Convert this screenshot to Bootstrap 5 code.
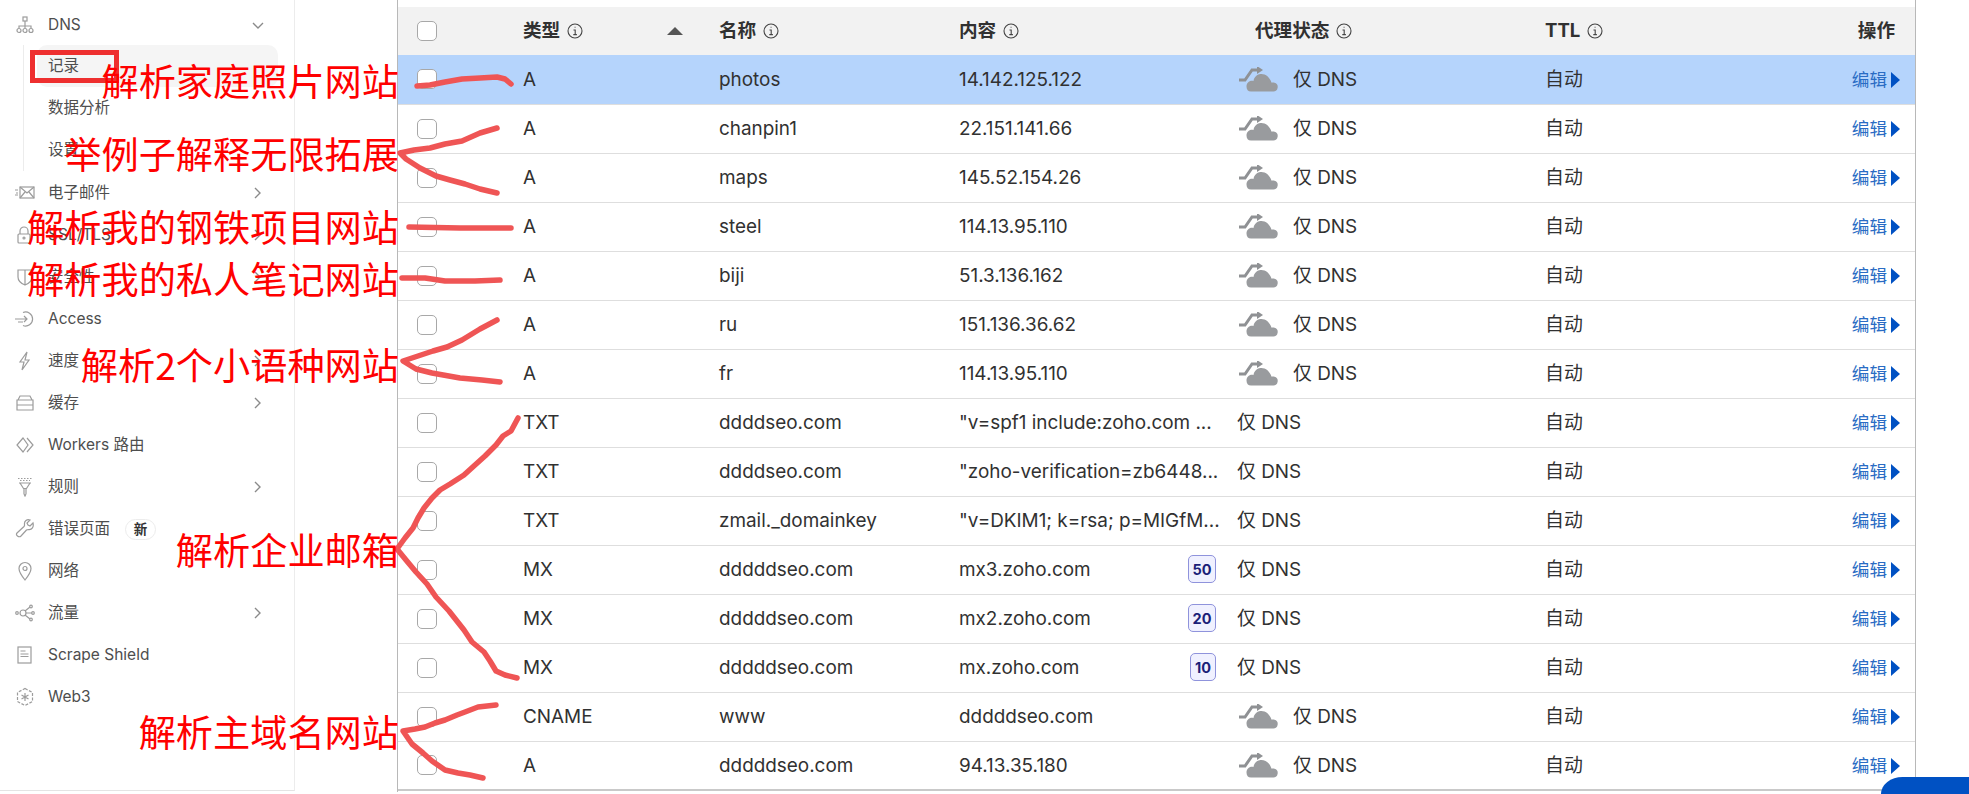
<!DOCTYPE html>
<html lang="zh-CN">
<head>
<meta charset="utf-8">
<title>DNS 记录</title>
<link href="https://cdn.jsdelivr.net/npm/bootstrap@5.3.0/dist/css/bootstrap.min.css" rel="stylesheet">
<style>
html,body{height:794px;overflow:hidden;background:#fff;}
body{font-family:Inter,"Noto Sans CJK SC",sans-serif;color:#313131;position:relative;}
.side-col{width:295px;height:791px;border-right:1px solid #ececec;border-bottom:1px solid #e4e4e4;padding:4px 30px 0 15px;flex:none;font-size:15.5px;color:#4e4e4e;}
.side-row{height:42px;}
.side-ico{width:20px;height:20px;margin-right:13px;flex:none;fill:none;stroke:#9c9c9c;stroke-width:1.2;}
.side-chev{width:12px;height:12px;margin-left:auto;margin-right:0;fill:none;stroke:#8a8a8a;stroke-width:1.4;}
.side-sub{margin-left:8px;margin-top:-1px;margin-bottom:1px;border-left:1px solid #ececec;position:relative;}
.side-sub .side-row{margin-left:13px;margin-right:-14px;padding-left:11px;}
.side-on{background:#f5f5f5;border-radius:10px;}
.new-tag{margin-left:15px;width:31px;height:21px;border:1px solid #ececec;border-radius:11px;font-size:13.5px;font-weight:700;color:#333;}
.rec-wrap{margin-left:102px;width:1519px;height:792px;padding-top:7px;border-left:1px solid #b8b8b8;border-right:1px solid #b8b8b8;flex:none;}
.rec-table{table-layout:fixed;width:1517px;margin:0;font-size:18.9px;border-bottom:2px solid #c9c9c9;}
.rec-table>*>tr>*{padding:0 0 0 12px;vertical-align:middle;height:49px;border-color:#dedede;color:#313131;white-space:nowrap;overflow:hidden;font-weight:400;}
.rec-table>tbody>tr>td{padding-top:2px;}
.rec-table>tbody>tr>td.cb{padding-top:0;}
.rec-table>thead>tr>*{height:48px;background:#f2f2f2;font-weight:700;font-size:18.6px;border-bottom:0;}
.rec-table>tbody>tr.rec-sel>td{background:#b5d4fc;}
.c1{width:113px;}.c2{width:196px;}.c3{width:240px;}.c4{width:278px;}.c5{width:308px;}.c6{width:247px;}.c7{width:135px;}
.rec-table>*>tr>.cb{padding-left:19px;}
.rec-table .form-check-input{width:20px;height:20px;margin:0;border:1px solid #a8a8a8;border-radius:5px;display:block;}
.info-ico{width:16px;height:16px;margin-left:7px;fill:none;stroke:#444;stroke-width:1.1;}
.sort-up{width:0;height:0;border-left:8px solid transparent;border-right:8px solid transparent;border-bottom:8px solid #555;margin-left:auto;margin-right:24px;}
.rec-table>*>tr>.prox-h{padding-left:30px;}
.cloud-ico{width:40px;height:25px;margin-left:1px;margin-right:15px;margin-top:-2px;flex:none;}
.prio{height:28px;width:28px;margin-right:9px;margin-top:-2px;border:1px solid #8f93dc;border-radius:5px;background:#f0f1ff;color:#1c1f78;font-size:14.5px;font-weight:700;flex:none;}
.prio-s{width:26px;}
.rec-table>*>tr>.act{padding:0 15px 0 0;text-align:right;}
.rec-table>tbody>tr>td.act{padding-top:2px;}
.rec-table>thead>tr>.act{padding-right:20px;}
.edit-lnk{color:#2a6cc4;text-decoration:none;font-size:17.6px;}
.edit-tri{display:inline-block;width:0;height:0;border-top:8px solid transparent;border-bottom:8px solid transparent;border-left:9px solid #0051c3;margin-left:4px;vertical-align:-2px;}
.ink{position:absolute;left:0;top:0;width:1969px;height:794px;pointer-events:none;fill:none;stroke:#ef5555;stroke-width:5.5;stroke-linecap:round;stroke-linejoin:round;}
.red-box{position:absolute;left:30px;top:50px;width:89px;height:33px;border:5px solid #ee2f2f;}
.note{position:absolute;left:0;width:399px;text-align:right;font-family:"Noto Sans CJK SC",sans-serif;font-size:37.2px;line-height:44px;color:#f00;white-space:nowrap;}
.n1{top:58px}.n2{top:131px}.n3{top:204px}.n4{top:256px}.n5{top:342px}.n6{top:527px}.n7{top:709px}
.chat-tab{position:absolute;right:0;bottom:0;width:88px;height:17px;background:#0051c3;border-top-left-radius:38px 30px;}
</style>
</head>
<body>
<svg width="0" height="0" class="position-absolute">
<defs>
<symbol id="i-info" viewBox="0 0 16 16"><circle cx="8" cy="8" r="7"/><path d="M6.500 7h1.700v4.600M6.300 11.600h3.600M7.600 4.300h.9"/></symbol>
<symbol id="i-cloud" viewBox="0 0 40 25"><path d="M1 13h6L14 3h7" fill="none" stroke="#8f9194" stroke-width="3"/><path d="M19 -1l6 4-6 4z" fill="#8f9194"/><path d="M13 24.500H35a4.500 4.500 0 0 0 1.500-8.800c-1-.3-3 0-3 0C32 10 27 6.500 22.500 7c-4 .5-6.500 3.500-7 7-4-1-7 2-7 5.500 0 3 1.500 5 4.500 5z" fill="#999b9e"/></symbol>
</defs>
</svg>
<div class="d-flex">
<nav class="side-col">
<div class="side-row d-flex align-items-center"><svg class="side-ico" viewBox="0 0 20 20"><rect x="8" y="2" width="4" height="4"/><path d="M10 6v5M4 13v-2h12v2M10 11v2"/><circle cx="4" cy="15.500" r="2"/><circle cx="10" cy="15.500" r="2"/><circle cx="16" cy="15.500" r="2"/></svg>DNS<svg class="side-chev" viewBox="0 0 12 12"><path d="M1 4l5 5 5-5"/></svg></div>
<div class="side-sub">
<div class="side-row side-on d-flex align-items-center">记录</div>
<div class="side-row d-flex align-items-center">数据分析</div>
<div class="side-row d-flex align-items-center">设置</div>
</div>
<div class="side-row d-flex align-items-center"><svg class="side-ico" viewBox="0 0 20 20"><rect x="5" y="4" width="14" height="11"/><path d="M5 4l7 6 7-6M5 15l5-6M19 15l-5-6M0 7h3M1 10h2M0 12h3"/></svg>电子邮件<svg class="side-chev" viewBox="0 0 12 12"><path d="M3 1l5 5-5 5"/></svg></div>
<div class="side-row d-flex align-items-center"><svg class="side-ico" viewBox="0 0 20 20"><rect x="3" y="9" width="12" height="9" rx="1"/><path d="M5 9V6a4 4 0 0 1 8 0v3"/><circle cx="9" cy="13" r="1"/></svg>SSL/TLS<svg class="side-chev" viewBox="0 0 12 12"><path d="M3 1l5 5-5 5"/></svg></div>
<div class="side-row d-flex align-items-center"><svg class="side-ico" viewBox="0 0 20 20"><path d="M3 3h14v7c0 4-3 6.500-7 8-4-1.500-7-4-7-8zM10 3v15"/></svg>安全性<svg class="side-chev" viewBox="0 0 12 12"><path d="M3 1l5 5-5 5"/></svg></div>
<div class="side-row d-flex align-items-center"><svg class="side-ico" viewBox="0 0 20 20"><path d="M8 3.500a7 7 0 1 1 0 13M0 10h12M9 7l3 3-3 3M3 13h5"/></svg>Access</div>
<div class="side-row d-flex align-items-center"><svg class="side-ico" viewBox="0 0 20 20"><path d="M12 1L5 11h4l-2 8 7-10h-4z"/></svg>速度<svg class="side-chev" viewBox="0 0 12 12"><path d="M3 1l5 5-5 5"/></svg></div>
<div class="side-row d-flex align-items-center"><svg class="side-ico" viewBox="0 0 20 20"><path d="M3 7l2-4h10l2 4zM2 7h16v5H2zM2 12h16v5H2z"/></svg>缓存<svg class="side-chev" viewBox="0 0 12 12"><path d="M3 1l5 5-5 5"/></svg></div>
<div class="side-row d-flex align-items-center"><svg class="side-ico" viewBox="0 0 20 20"><path d="M8 3L2 10l6 7 5-7zM12 3l6 7-6 7"/></svg>Workers 路由</div>
<div class="side-row d-flex align-items-center"><svg class="side-ico" viewBox="0 0 20 20"><path d="M3 1.500h14M5 3.500h10" stroke-dasharray="1.500 1.500"/><path d="M4 6h12M5 6l3.500 5.500h3L15 6M9 11.500V17M11 11.500V17M9 17l1 2 1-2"/></svg>规则<svg class="side-chev" viewBox="0 0 12 12"><path d="M3 1l5 5-5 5"/></svg></div>
<div class="side-row d-flex align-items-center"><svg class="side-ico" viewBox="0 0 20 20"><path d="M18 4l-3 3-2-1-1-2 3-3c-3-1-6 1-5.500 4.500.1.700 0 1.500-.5 2L2 14c-2 2 2 5 4 3l5.500-6c.5-.5 1-.5 2-.5C17 11 19 8 18 4z"/></svg>错误页面<span class="new-tag d-inline-flex align-items-center justify-content-center">新</span></div>
<div class="side-row d-flex align-items-center"><svg class="side-ico" viewBox="0 0 20 20"><path d="M10 19C6 14 4 10.500 4 7.500a6 6 0 0 1 12 0c0 3-2 6.500-6 11.500z"/><circle cx="10" cy="7.500" r="2"/></svg>网络</div>
<div class="side-row d-flex align-items-center"><svg class="side-ico" viewBox="0 0 20 20"><circle cx="2" cy="10" r="1.300"/><circle cx="8" cy="10" r="3"/><path d="M10 8l5-4M10 12l5 4M11 10h6"/><circle cx="16" cy="3.500" r="1.300"/><circle cx="18" cy="10" r="1.300"/><circle cx="16" cy="16.500" r="1.300"/></svg>流量<svg class="side-chev" viewBox="0 0 12 12"><path d="M3 1l5 5-5 5"/></svg></div>
<div class="side-row d-flex align-items-center"><svg class="side-ico" viewBox="0 0 20 20"><rect x="3" y="2" width="13" height="16"/><path d="M5.500 6h5M5.500 9h8M5.500 11.500h8"/></svg>Scrape Shield</div>
<div class="side-row d-flex align-items-center"><svg class="side-ico" viewBox="0 0 20 20"><path d="M10 1.500l7.500 4v9l-7.500 4-7.500-4v-9z" stroke-dasharray="3 1.500"/><path d="M10 6v8M6.500 8l7 4M13.500 8l-7 4"/></svg>Web3</div>
</nav>
<main class="rec-wrap">
<table class="table rec-table">
<colgroup><col class="c1"><col class="c2"><col class="c3"><col class="c4"><col class="c5"><col class="c6"><col class="c7"></colgroup>
<thead>
<tr>
<th class="cb"><input class="form-check-input" type="checkbox" aria-label="全选"></th>
<th><div class="d-flex align-items-center">类型<svg class="info-ico"><use href="#i-info"/></svg><span class="sort-up"></span></div></th>
<th><div class="d-flex align-items-center">名称<svg class="info-ico"><use href="#i-info"/></svg></div></th>
<th><div class="d-flex align-items-center">内容<svg class="info-ico"><use href="#i-info"/></svg></div></th>
<th class="prox-h"><div class="d-flex align-items-center">代理状态<svg class="info-ico"><use href="#i-info"/></svg></div></th>
<th><div class="d-flex align-items-center">TTL<svg class="info-ico"><use href="#i-info"/></svg></div></th>
<th class="act">操作</th>
</tr>
</thead>
<tbody>
<tr class="rec-sel"><td class="cb"><input class="form-check-input" type="checkbox" aria-label="选择"></td><td>A</td><td>photos</td><td>14.142.125.122</td><td><div class="d-flex align-items-center"><svg class="cloud-ico"><use href="#i-cloud"/></svg>仅 DNS</div></td><td>自动</td><td class="act"><a class="edit-lnk" href="#">编辑<span class="edit-tri"></span></a></td></tr>
<tr><td class="cb"><input class="form-check-input" type="checkbox" aria-label="选择"></td><td>A</td><td>chanpin1</td><td>22.151.141.66</td><td><div class="d-flex align-items-center"><svg class="cloud-ico"><use href="#i-cloud"/></svg>仅 DNS</div></td><td>自动</td><td class="act"><a class="edit-lnk" href="#">编辑<span class="edit-tri"></span></a></td></tr>
<tr><td class="cb"><input class="form-check-input" type="checkbox" aria-label="选择"></td><td>A</td><td>maps</td><td>145.52.154.26</td><td><div class="d-flex align-items-center"><svg class="cloud-ico"><use href="#i-cloud"/></svg>仅 DNS</div></td><td>自动</td><td class="act"><a class="edit-lnk" href="#">编辑<span class="edit-tri"></span></a></td></tr>
<tr><td class="cb"><input class="form-check-input" type="checkbox" aria-label="选择"></td><td>A</td><td>steel</td><td>114.13.95.110</td><td><div class="d-flex align-items-center"><svg class="cloud-ico"><use href="#i-cloud"/></svg>仅 DNS</div></td><td>自动</td><td class="act"><a class="edit-lnk" href="#">编辑<span class="edit-tri"></span></a></td></tr>
<tr><td class="cb"><input class="form-check-input" type="checkbox" aria-label="选择"></td><td>A</td><td>biji</td><td>51.3.136.162</td><td><div class="d-flex align-items-center"><svg class="cloud-ico"><use href="#i-cloud"/></svg>仅 DNS</div></td><td>自动</td><td class="act"><a class="edit-lnk" href="#">编辑<span class="edit-tri"></span></a></td></tr>
<tr><td class="cb"><input class="form-check-input" type="checkbox" aria-label="选择"></td><td>A</td><td>ru</td><td>151.136.36.62</td><td><div class="d-flex align-items-center"><svg class="cloud-ico"><use href="#i-cloud"/></svg>仅 DNS</div></td><td>自动</td><td class="act"><a class="edit-lnk" href="#">编辑<span class="edit-tri"></span></a></td></tr>
<tr><td class="cb"><input class="form-check-input" type="checkbox" aria-label="选择"></td><td>A</td><td>fr</td><td>114.13.95.110</td><td><div class="d-flex align-items-center"><svg class="cloud-ico"><use href="#i-cloud"/></svg>仅 DNS</div></td><td>自动</td><td class="act"><a class="edit-lnk" href="#">编辑<span class="edit-tri"></span></a></td></tr>
<tr><td class="cb"><input class="form-check-input" type="checkbox" aria-label="选择"></td><td>TXT</td><td>ddddseo.com</td><td>"v=spf1 include:zoho.com ...</td><td>仅 DNS</td><td>自动</td><td class="act"><a class="edit-lnk" href="#">编辑<span class="edit-tri"></span></a></td></tr>
<tr><td class="cb"><input class="form-check-input" type="checkbox" aria-label="选择"></td><td>TXT</td><td>ddddseo.com</td><td>"zoho-verification=zb6448...</td><td>仅 DNS</td><td>自动</td><td class="act"><a class="edit-lnk" href="#">编辑<span class="edit-tri"></span></a></td></tr>
<tr><td class="cb"><input class="form-check-input" type="checkbox" aria-label="选择"></td><td>TXT</td><td>zmail._domainkey</td><td>"v=DKIM1; k=rsa; p=MIGfM...</td><td>仅 DNS</td><td>自动</td><td class="act"><a class="edit-lnk" href="#">编辑<span class="edit-tri"></span></a></td></tr>
<tr><td class="cb"><input class="form-check-input" type="checkbox" aria-label="选择"></td><td>MX</td><td>dddddseo.com</td><td><div class="d-flex align-items-center justify-content-between">mx3.zoho.com<span class="prio d-flex align-items-center justify-content-center">50</span></div></td><td>仅 DNS</td><td>自动</td><td class="act"><a class="edit-lnk" href="#">编辑<span class="edit-tri"></span></a></td></tr>
<tr><td class="cb"><input class="form-check-input" type="checkbox" aria-label="选择"></td><td>MX</td><td>dddddseo.com</td><td><div class="d-flex align-items-center justify-content-between">mx2.zoho.com<span class="prio d-flex align-items-center justify-content-center">20</span></div></td><td>仅 DNS</td><td>自动</td><td class="act"><a class="edit-lnk" href="#">编辑<span class="edit-tri"></span></a></td></tr>
<tr><td class="cb"><input class="form-check-input" type="checkbox" aria-label="选择"></td><td>MX</td><td>dddddseo.com</td><td><div class="d-flex align-items-center justify-content-between">mx.zoho.com<span class="prio prio-s d-flex align-items-center justify-content-center">10</span></div></td><td>仅 DNS</td><td>自动</td><td class="act"><a class="edit-lnk" href="#">编辑<span class="edit-tri"></span></a></td></tr>
<tr><td class="cb"><input class="form-check-input" type="checkbox" aria-label="选择"></td><td>CNAME</td><td>www</td><td>dddddseo.com</td><td><div class="d-flex align-items-center"><svg class="cloud-ico"><use href="#i-cloud"/></svg>仅 DNS</div></td><td>自动</td><td class="act"><a class="edit-lnk" href="#">编辑<span class="edit-tri"></span></a></td></tr>
<tr><td class="cb"><input class="form-check-input" type="checkbox" aria-label="选择"></td><td>A</td><td>dddddseo.com</td><td>94.13.35.180</td><td><div class="d-flex align-items-center"><svg class="cloud-ico"><use href="#i-cloud"/></svg>仅 DNS</div></td><td>自动</td><td class="act"><a class="edit-lnk" href="#">编辑<span class="edit-tri"></span></a></td></tr>
</tbody>
</table>
</main>
</div>
<svg class="ink" viewBox="0 0 1969 794">
<path d="M417 86L430 85 445 82 462 79 480 78 497 77 505 79 511 84"/>
<path d="M497 128L480 133 462 141 445 144 430 148 414 150 400 153 406 159 420 168 436 176 450 180 465 184 480 189 497 193"/>
<path d="M409 227L460 228 511 228"/>
<path d="M402 278L425 278 445 281 475 281 500 280"/>
<path d="M497 320L480 329 462 340 447 347 433 351 418 356 403 361 416 369 432 373 460 378 482 380 500 382"/>
<path d="M518 418L511 431 503 436 496 445 485 456 475 465 464 475 450 484 440 490 432 498 424 508 418 518 413 528 405 538 397 549 406 560 416 572 427 584 436 597 449 611 464 630 472 642 484 652 490 661 496 671 505 675 517 678"/>
<path d="M496 705L478 707 465 712 457 715 445 720 435 723 425 727 415 729 403 731 412 744 423 753 432 761 445 770 458 773 470 775 483 778"/>
</svg>
<div class="red-box"></div>
<div class="note n1">解析家庭照片网站</div>
<div class="note n2">举例子解释无限拓展</div>
<div class="note n3">解析我的钢铁项目网站</div>
<div class="note n4">解析我的私人笔记网站</div>
<div class="note n5">解析2个小语种网站</div>
<div class="note n6">解析企业邮箱</div>
<div class="note n7">解析主域名网站</div>
<div class="chat-tab"></div>
<script src="https://cdn.jsdelivr.net/npm/bootstrap@5.3.0/dist/js/bootstrap.bundle.min.js"></script>
</body>
</html>
